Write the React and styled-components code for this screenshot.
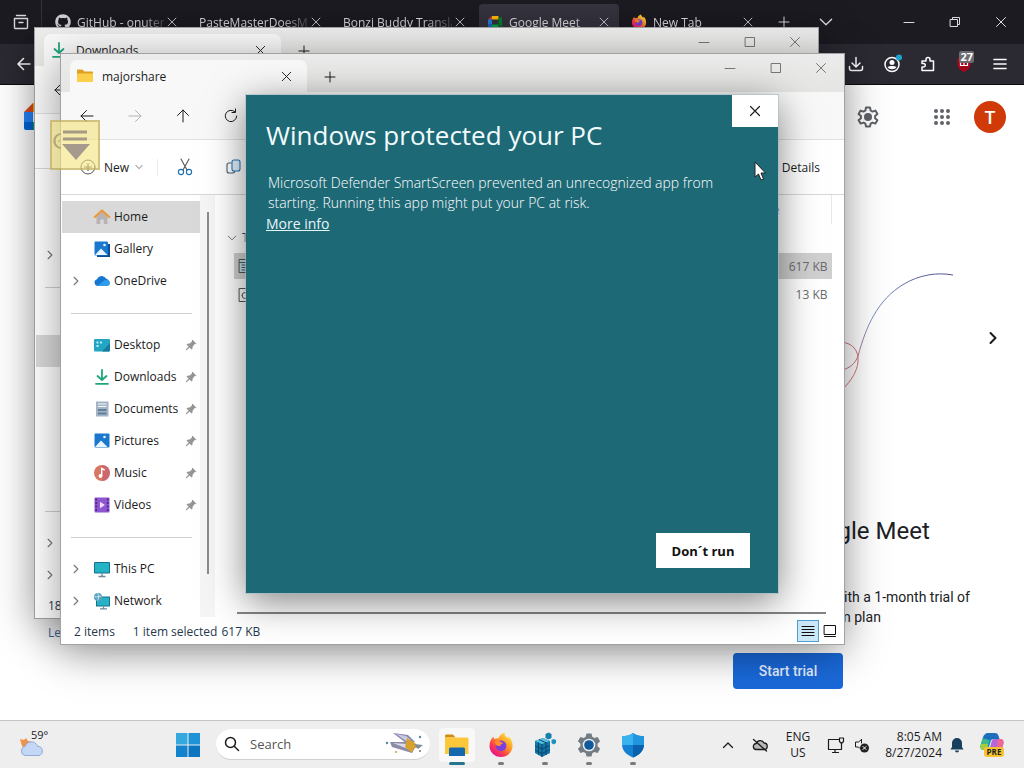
import React from "react";
import styled, { createGlobalStyle, css } from "styled-components";
import { FaGithub } from "react-icons/fa";

const ui = `"Open Sans", "Noto Sans", sans-serif`;
const web = `Roboto, "Liberation Sans", sans-serif`;

const GlobalStyle = createGlobalStyle`
  * { box-sizing: border-box; }
  body { margin: 0; font-family: ${ui}; font-size: 12px; color: #1b1b1b; }
  button { margin: 0; padding: 0; border: 0; background: none; font: inherit; color: inherit; cursor: pointer; }
  h1, h2, p, ul { margin: 0; padding: 0; font-weight: 400; }
  svg { display: block; flex: none; }
`;

/* ---------- icons ---------- */

const Line = ({ d, size = 16, box = 16, stroke = "currentColor", width = 1, children }) => (
  <svg width={size} height={size} viewBox={`0 0 ${box} ${box}`} fill="none" stroke={stroke} strokeWidth={width} strokeLinecap="round" strokeLinejoin="round" aria-hidden="true">
    {d && <path d={d} />}
    {children}
  </svg>
);

const CloseIcon = ({ size = 16, width }) => <Line size={size} width={width} d="M3.5 3.5l9 9M12.5 3.5l-9 9" />;
const PlusIcon = () => <Line d="M8 3v10M3 8h10" />;
const MinIcon = () => <Line d="M3 8.5h10" />;
const MaxIcon = () => <Line d="M3.5 3.5h9v9h-9z" />;
const RestoreIcon = () => <Line d="M3.5 5.5h7v7h-7zM5.5 5.5v-2h7v7h-2" />;
const BackIcon = ({ width }) => <Line width={width} d="M14 8H2M7.5 2.5L2 8l5.500 5.500" />;
const ForwardIcon = () => <Line d="M2 8h12M8.500 2.500L14 8l-5.500 5.500" />;
const UpIcon = () => <Line d="M8 14V2M2.500 7.500L8 2l5.500 5.500" />;
const RefreshIcon = () => <Line d="M13.700 8a5.700 5.700 0 1 1-1.900-4.300M12.500 1v3.500H9" />;
const ChevronDown = ({ size = 14, width }) => <Line size={size} width={width} d="M3 5.500l5 5 5-5" />;
const ChevronUp = () => <Line size={16} width={1.3} d="M3.500 10.500L8 6l4.500 4.500" />;
const ChevronRight = ({ size = 12, width = 1.5 }) => <Line size={size} width={width} d="M5.500 3l5 5-5 5" />;

const FolderIcon = ({ size = 18 }) => (
  <svg width={size} height={size} viewBox="0 0 18 18" aria-hidden="true">
    <path d="M1 3.500C1 3 1.400 2.500 2 2.500h4.500L8.500 4.500H16c.6 0 1 .4 1 1V7H1z" fill="#e0a020" />
    <path d="M1 6.500h16V14c0 .600-.400 1-1 1H2c-.600 0-1-.400-1-1z" fill="#fccf4a" />
  </svg>
);
const DownloadGlyph = ({ size = 18 }) => (
  <Line size={size} box={18} stroke="#1ea57d" width={1.8}>
    <path d="M9 2v9.500M4.500 8L9 12l4.500-4" />
    <path d="M3 15.800h12" />
  </Line>
);
const HomeIcon = () => (
  <svg width="18" height="18" viewBox="0 0 18 18" aria-hidden="true">
    <path d="M3.500 8.500L9 3.500l5.500 5V16h-3.800v-4.500H7.300V16H3.500z" fill="#b9b3b5" />
    <path d="M1.800 9L9 2.500 16.200 9" fill="none" stroke="#eb9a3b" strokeWidth="2.300" strokeLinecap="round" strokeLinejoin="round" />
  </svg>
);
const PictureIcon = ({ stacked }) => (
  <svg width="18" height="18" viewBox="0 0 18 18" aria-hidden="true">
    {stacked && <path d="M4 4h13v13H4z" fill="#0e4f91" />}
    <rect x="1.500" y="1.500" width={stacked ? 13.500 : 15} height="14" rx="1" fill="#1a78cf" />
    <path d="M2 15l6-6.500 6.500 6.500z" fill="#e9f5ff" />
    <circle cx="11.500" cy="5" r="1.300" fill="#e9f5ff" />
  </svg>
);
const CloudIcon = () => (
  <svg width="18" height="18" viewBox="0 0 18 18" aria-hidden="true">
    <path d="M4.500 14A3.500 3.500 0 0 1 4 7.200 5 5 0 0 1 13 6.500 4 4 0 0 1 14 14z" fill="#1677d2" />
    <path d="M4.500 14L11 8.500c2-1.500 6-.500 6 2.500 0 2-1.500 3-3 3z" fill="#2f9bea" />
  </svg>
);
const DesktopIcon = () => (
  <svg width="18" height="18" viewBox="0 0 18 18" aria-hidden="true">
    <rect x="1" y="3" width="16" height="12.500" rx="1" fill="#22a5c2" />
    <path d="M9 15.500L17 7v7.500l-1 1z" fill="#147c9f" />
    <path d="M3.500 5.500h2v2h-2zM3.500 9h2v2h-2zM7 5.500h2v2H7z" fill="#b9f0f6" />
  </svg>
);
const DocumentIcon = () => (
  <svg width="18" height="18" viewBox="0 0 18 18" aria-hidden="true">
    <path d="M3 1.500h12.500v15H3z" fill="#a3b4c4" />
    <path d="M5 4h8.500M5 6.500h8.500" stroke="#f3f8fc" strokeWidth="1.200" />
    <path d="M5 9h8.500v2H5zM5 12.500h8.500v2H5z" fill="#5f7f9d" />
  </svg>
);
const MusicIcon = () => (
  <svg width="18" height="18" viewBox="0 0 18 18" aria-hidden="true">
    <circle cx="9" cy="9" r="8" fill="#d9765f" />
    <path d="M9 1a8 8 0 0 1 0 16z" fill="#c25e77" opacity=".6" />
    <circle cx="7.500" cy="12" r="1.900" fill="#fff" />
    <path d="M8.700 12V4.500l3 1.500" fill="none" stroke="#fff" strokeWidth="1.400" />
  </svg>
);
const VideoIcon = () => (
  <svg width="18" height="18" viewBox="0 0 18 18" aria-hidden="true">
    <rect x="1.500" y="1.500" width="15" height="15" rx="1" fill="#8f55cf" />
    <path d="M3.200 2.500v13M14.800 2.500v13" stroke="#4d2a86" strokeWidth="1.800" strokeDasharray="2 1.500" />
    <path d="M7 5.800l5 3.200-5 3.200z" fill="#f1dcff" />
  </svg>
);
const MonitorIcon = () => (
  <svg width="18" height="18" viewBox="0 0 18 18" aria-hidden="true">
    <rect x="1" y="2" width="16" height="11.500" rx="1" fill="#166f93" />
    <rect x="2" y="3" width="14" height="9.500" fill="#22b4c4" />
    <path d="M9 13.500v2.500M5.500 16.500h7" stroke="#6f8796" strokeWidth="1.300" />
  </svg>
);
const NetworkIcon = () => (
  <svg width="18" height="18" viewBox="0 0 18 18" aria-hidden="true">
    <rect x="3" y="4.500" width="14" height="10" fill="#16708f" />
    <rect x="4" y="5.500" width="12" height="8" fill="#28b2c5" />
    <circle cx="5" cy="5" r="4" fill="#5aa2bd" />
    <path d="M1.500 4.500c2.500 1.500 4.500-1 6.500 0M4.500 1.500c2 2 1 5 0 7" stroke="#d3f1f6" strokeWidth=".9" fill="none" />
    <path d="M10.500 14.500v2M7 16.800h7" stroke="#6f8796" strokeWidth="1.200" />
  </svg>
);
const PinIcon = () => (
  <svg width="12" height="12" viewBox="0 0 12 12" aria-hidden="true">
    <path d="M7.500.8l3.700 3.700-.8.700-.7-.1-2 2.300-.3 2.400-.9.700-2-2L1.500 11.200.800 11.300.800 10.600 3.500 7.500l-2-2 .8-.8 2.400-.3 2.300-2-.2-.8z" fill="#959595" />
  </svg>
);
const ScissorsIcon = () => (
  <Line size={18} box={18} width={1.1}>
    <path d="M5 1l6 11M13 1L7 12" stroke="#555" />
    <circle cx="5" cy="14" r="2.600" stroke="#1d6fae" />
    <circle cx="13" cy="14" r="2.600" stroke="#1d6fae" />
  </Line>
);
const CopyIcon = () => (
  <Line size={18} box={18} width={1.1}>
    <path d="M6 5H4a2 2 0 0 0-2 2v6a2 2 0 0 0 2 2h4a2 2 0 0 0 1.800-1.500" stroke="#48606f" />
    <rect x="7" y="2" width="8" height="11" rx="2" stroke="#2178b8" fill="#dff0fb" />
  </Line>
);
const CirclePlus = () => (
  <Line size={16}>
    <circle cx="8" cy="8" r="7" stroke="#555" />
    <path d="M8 4.500v7M4.500 8h7" stroke="#555" />
  </Line>
);
const FirefoxIcon = ({ size = 26 }) => (
  <svg width={size} height={size} viewBox="0 0 26 26" aria-hidden="true">
    <defs>
      <linearGradient id="fx" x1=".85" y1=".1" x2=".2" y2=".9">
        <stop offset="0" stopColor="#ffe23c" /><stop offset=".4" stopColor="#ff9526" /><stop offset=".75" stopColor="#fb3a4e" /><stop offset="1" stopColor="#e5178d" />
      </linearGradient>
    </defs>
    <path d="M13 25C6.300 25 1.500 20 1.500 14c0-4 1.700-7.500 4-9.500 0 1.200.4 2 1 2.600C8 6.400 9.500 6.200 10.500 6.500 11 4 13.500 1.500 16.500.800c-.4 2.400 1.700 3.800 3.800 5.400.2-.700.200-1.300 0-2 2.800 2.300 4.300 5.800 4.300 9.600C24.600 20 19.600 25 13 25z" fill="url(#fx)" />
    <circle cx="13" cy="13.800" r="5.400" fill="#7b3fe0" />
    <path d="M6.500 10.500c2-2.300 5-1.800 6.300-.4 1.200.1 2.200.600 2.200 1.300-1.500.400-2.500 1-2.500 2.300-2 1-4.500 0-5-2z" fill="#ff8b2a" />
  </svg>
);
const MeetFavicon = () => (
  <svg width="16" height="16" viewBox="0 0 16 16" aria-hidden="true">
    <path d="M1 5.500L5 2v3.500z" fill="#e34133" /><path d="M5 2h6.500v3.500H5z" fill="#fbbc04" /><path d="M1 5.500h4v5H1z" fill="#2a7de1" />
    <path d="M1 10.500h4V14H2a1 1 0 0 1-1-1z" fill="#1967d2" /><path d="M5 10.500h6.500V13a1 1 0 0 1-1 1H5z" fill="#00ac47" /><path d="M11.500 4.500L15 2.500v11l-3.500-3z" fill="#00832d" />
  </svg>
);
const MeetLogo = () => (
  <svg width="40" height="30" viewBox="0 0 40 30" aria-hidden="true">
    <path d="M0 10L9 1v9z" fill="#e34b22" /><path d="M9 1h18a2 2 0 0 1 2 2v7H9z" fill="#fbbc04" /><path d="M0 10h9v10H0z" fill="#2684fc" />
    <path d="M0 20h9v8H2a2 2 0 0 1-2-2z" fill="#0066da" /><path d="M9 20h20v6a2 2 0 0 1-2 2H9z" fill="#00ac47" /><path d="M29 10l9-7v23l-9-7z" fill="#00832d" />
  </svg>
);
const GearOutline = () => (
  <svg width="24" height="24" viewBox="0 0 24 24" fill="none" aria-hidden="true">
    <path d="M10 2.500h4l.6 3 1.900 1.100 2.900-1 2 3.400-2.300 2v2.200l2.300 2-2 3.400-2.900-1-1.900 1.100-.6 2.900h-4l-.6-2.900-1.900-1.100-2.900 1-2-3.400 2.300-2V11L2.600 9l2-3.400 2.900 1 1.900-1.100z" stroke="#5f6368" strokeWidth="2" strokeLinejoin="round" />
    <circle cx="12" cy="12" r="4" fill="#5f6368" />
  </svg>
);
const AppsIcon = () => (
  <svg width="20" height="20" viewBox="0 0 20 20" fill="#5f6368" aria-hidden="true">
    {[4, 10, 16].map((y) => [4, 10, 16].map((x) => <circle key={`${x}${y}`} cx={x} cy={y} r="2" />))}
  </svg>
);

/* ---------- browser ---------- */

const Desktop = styled.div`
  position: relative; min-height: 100vh; display: flex; flex-direction: column; overflow: hidden; background: #fff;
`;
const Browser = styled.section`flex: 1; display: flex; flex-direction: column;`;
const TabStrip = styled.header`
  display: flex; align-items: center; height: 44px; background: #1c1b22; color: #dcdce0;
`;
const Recent = styled.button`
  display: flex; align-items: center; justify-content: center; width: 42px; height: 44px; margin-right: 5px;
  border-right: 1px solid #34333c;
`;
const Tabs = styled.div`display: flex; gap: 4px;`;
const BrowserTab = styled.div`
  display: flex; align-items: center; width: 140px; height: 36px; padding: 0 7px 0 8px; gap: 6px; border-radius: 4px;
  background: ${(p) => (p.$active ? "#35343f" : "transparent")};
`;
const TabLabel = styled.span`
  flex: 1; margin-right: -6px; overflow: hidden; white-space: nowrap;
  mask-image: linear-gradient(to right, #000 75%, rgba(0, 0, 0, 0.2) 100%);
`;
const IconButton = styled.button`
  display: flex; align-items: center; justify-content: center; flex: none;
  width: ${(p) => p.$w || 16}px; height: ${(p) => p.$h || 16}px; color: ${(p) => p.$color || "inherit"};
`;
const Right = styled.div`display: flex; align-items: center; margin-left: auto;`;
const Toolbar = styled.div`
  display: flex; align-items: center; height: 41px; padding: 0 6px; background: #2b2a33; color: #fbfbfe;
  border-bottom: 1px solid #0c0c0d;
`;
const ExtBadge = styled.span`
  position: absolute; top: -3px; right: 8px; padding: 0 1px; border-radius: 2px; background: #6b6b70; color: #fff;
  font-size: 11px; font-weight: 700; line-height: 12px;
`;
const Ublock = styled(IconButton)`position: relative;`;

const MeetHeader = styled.div`display: flex; align-items: center; height: 64px; padding: 0 18px 0 24px;`;
const MeetTools = styled(Right)`gap: 40px;`;
const Account = styled.div`display: flex; align-items: center; gap: 22px;`;
const Avatar = styled.button`
  width: 32px; height: 32px; border-radius: 50%; background: #d03a08; color: #fff; font: 500 18px ${web};
`;
const MeetMain = styled.main`
  display: grid; grid-template-columns: 1fr 472px; font-family: ${web};
`;
const MeetIntro = styled.div`display: flex; flex-direction: column; justify-content: flex-end; padding: 0 48px 47px;`;
const LearnMore = styled.a`color: #3c6a9e; font: 12px/18px ${ui}; text-decoration: none;`;
const Promo = styled.div`padding-top: 24px; text-align: center;`;
const Carousel = styled.div`display: flex; align-items: center; justify-content: space-between; padding: 0 19px;`;
const PromoTitle = styled.h1`margin-top: 12px; font-size: 24px; line-height: 32px; color: #202124;`;
const PromoText = styled.p`margin-top: 40px; font-size: 14px; line-height: 20px; color: #202124;`;
const StartTrial = styled.button`
  width: 110px; height: 36px; margin-top: 26px; border-radius: 4px; background: #1a69da; color: #e4efff;
  font: 500 14px ${web};
`;

const browserTabs = [
  { label: "GitHub - onuter", icon: <FaGithub size={16} /> },
  { label: "PasteMasterDoesMa" },
  { label: "Bonzi Buddy Transla" },
  { label: "Google Meet", icon: <MeetFavicon />, active: true },
  { label: "New Tab", icon: <FirefoxIcon size={16} /> },
];

function BrowserWindow() {
  return (
    <Browser>
      <TabStrip>
        <Recent aria-label="Recent browsing">
          <Line width={1.4}><path d="M3.500 1.500h9M1.500 4.500h13v9a1 1 0 0 1-1 1h-11a1 1 0 0 1-1-1zM6 8.500h4" /></Line>
        </Recent>
        <Tabs>
          {browserTabs.map((t) => (
            <BrowserTab key={t.label} $active={t.active}>
              {t.icon}
              <TabLabel>{t.label}</TabLabel>
              <IconButton aria-label={`Close ${t.label}`}><CloseIcon size={14} /></IconButton>
            </BrowserTab>
          ))}
        </Tabs>
        <IconButton aria-label="New tab" $w={42}><PlusIcon /></IconButton>
        <IconButton aria-label="List all tabs" $w={42}><ChevronDown size={18} width={1.2} /></IconButton>
        <Right>
          <IconButton aria-label="Minimize" $w={46}><MinIcon /></IconButton>
          <IconButton aria-label="Restore" $w={46}><RestoreIcon /></IconButton>
          <IconButton aria-label="Close" $w={46}><CloseIcon /></IconButton>
        </Right>
      </TabStrip>
      <Toolbar>
        <IconButton aria-label="Back" $w={36}><BackIcon width={1.6} /></IconButton>
        <Right>
          <IconButton aria-label="Downloads" $w={36}><Line width={1.5} d="M8 1.500v9M4 7l4 4 4-4M1.500 10.500v2a2 2 0 0 0 2 2h9a2 2 0 0 0 2-2v-2" /></IconButton>
          <IconButton aria-label="Account" $w={36}>
            <svg width="20" height="20" viewBox="0 0 20 20" fill="none" aria-hidden="true">
              <circle cx="10" cy="10.500" r="7" stroke="#fbfbfe" strokeWidth="1.500" />
              <circle cx="10" cy="8.500" r="2.500" fill="#fbfbfe" /><path d="M5.500 13c1.500-1.500 7.500-1.500 9 0-1.500 3-7.500 3-9 0z" fill="#fbfbfe" />
              <circle cx="17" cy="3.500" r="3" fill="#1ba3d0" />
            </svg>
          </IconButton>
          <IconButton aria-label="Extensions" $w={36}>
            <Line width={1.5} d="M2 5h4V3.500a2 2 0 0 1 4 0V5h3.500v9.500H2V11h1.500a1.700 1.700 0 0 0 0-3.500H2z" />
          </IconButton>
          <Ublock aria-label="uBlock Origin" $w={36} $h={20}>
            <svg width="16" height="18" viewBox="0 0 16 18" aria-hidden="true">
              <path d="M8 1l6.500 2v6c0 4-3 6.500-6.500 8-3.500-1.500-6.500-4-6.500-8V3z" fill="#a3081a" />
              <path d="M4.500 7v3.500h3.500V7M8 10.500h3.500V7H8" stroke="#fff" strokeWidth="1.200" fill="none" />
            </svg>
            <ExtBadge>27</ExtBadge>
          </Ublock>
          <IconButton aria-label="Menu" $w={36}><Line width={1.6} d="M2 3.500h12M2 8h12M2 12.500h12" /></IconButton>
        </Right>
      </Toolbar>
      <MeetHeader>
        <MeetLogo />
        <MeetTools>
          <IconButton aria-label="Settings" $w={48} $h={48}><GearOutline /></IconButton>
          <Account>
            <IconButton aria-label="Google apps" $w={20} $h={48}><AppsIcon /></IconButton>
            <Avatar>T</Avatar>
          </Account>
        </MeetTools>
      </MeetHeader>
      <MeetMain>
        <MeetIntro><LearnMore href="#learn">Learn more about Google Meet</LearnMore></MeetIntro>
        <Promo>
          <Carousel>
            <IconButton aria-label="Previous" $w={24} $h={24}><ChevronRight size={16} /></IconButton>
            <svg width="330" height="330" viewBox="0 0 330 330" fill="none" aria-hidden="true">
              <defs>
                <linearGradient id="arc" x1="1" y1="0" x2="0" y2="1">
                  <stop offset="0" stopColor="#50528f" /><stop offset=".6" stopColor="#7d8fbf" /><stop offset="1" stopColor="#d06a72" />
                </linearGradient>
              </defs>
              <path d="M330 102c-16-3-34 0-49 9-27 16-38 43-46 72-3 8-8 12-18 15" stroke="url(#arc)" />
              <path d="M216 169c14 0 20 9 19 20-1 9-6 18-16 28" stroke="#d9707a" />
            </svg>
            <IconButton aria-label="Next" $w={24} $h={24}><ChevronRight size={16} width={2} /></IconButton>
          </Carousel>
          <PromoTitle>Do more with Google Meet</PromoTitle>
          <PromoText>Enjoy premium video calling options with a 1-month trial of<br />the Google One Premium plan</PromoText>
          <StartTrial>Start trial</StartTrial>
        </Promo>
      </MeetMain>
    </Browser>
  );
}

/* ---------- file explorer ---------- */

const Window = styled.section`
  position: absolute; left: ${(p) => p.$x}px; top: ${(p) => p.$y}px; z-index: ${(p) => p.$z};
  display: flex; flex-direction: column; width: 785px;
  border: 1px solid #a2a2a2; background: #fff; box-shadow: 0 8px 40px rgba(0, 0, 0, 0.38);
`;
const TitleBar = styled.header`
  display: flex; align-items: flex-start; height: 38px; padding-left: 9px; background: linear-gradient(#ebebeb, #e5e5e3);
`;
const FolderTab = styled.div`
  display: flex; align-items: center; width: 237px; height: 32px; margin-top: 6px; padding: 0 13px 0 6px; gap: 8px;
  border-radius: 7px 7px 0 0; background: #f8f8f8;
`;
const FolderName = styled.span`flex: 1;`;
const NavRow = styled.div`
  display: flex; align-items: center; height: 48px; padding-left: 2px; background: #f8f8f8; border-bottom: 1px solid #e1e1e1;
`;
const CommandBar = styled.div`
  display: flex; align-items: center; height: 55px; padding: 0 24px 0 19px; border-bottom: 1px solid #d8d8d8;
`;
const NewButton = styled.button`
  display: flex; align-items: center; gap: 8px; padding-right: 13px; border-right: 1px solid #ececec; svg:last-child { color: #aaa; margin-left: -3px; }
`;
const DetailsButton = styled.button`margin-left: auto;`;
const Body = styled.div`display: flex;`;
const Sidebar = styled.nav`width: 139px; padding: 6px 0 0 1px;`;
const SideLink = styled.a`
  display: grid; grid-template-columns: 28px 18px 1fr 12px; align-items: center; column-gap: 3px; height: 32px;
  padding: 0 3px 1px 0; color: inherit; text-decoration: none;
  background: ${(p) => (p.$selected ? "#d9d9d9" : "transparent")};
`;
const Expander = styled.span`display: flex; justify-content: center; color: #777;`;
const Divider = styled.hr`height: 1px; margin: 16px 8px 15px 9px; border: 0; background: #cfcfcf;`;
const SideScroll = styled.div`
  width: 15px; padding: 17px 0 43px 7px; background: #f5f5f5;
  &::before { content: ""; display: block; width: 2px; height: 100%; background: #8b8b8b; }
`;
const Files = styled.div`flex: 1; display: flex; flex-direction: column; padding: 0 12px 0 19px;`;
const FileTable = styled.table`
  width: 100%; border-collapse: collapse; color: #6b6b6b;
  th, td { padding: 0; font-weight: 400; text-align: left; }
  td:last-child { width: 74px; padding-right: 4px; text-align: right; }
`;
const HeadCell = styled.th`
  height: 29px;
  &:first-child { padding-left: 24px; }
  &:last-child { color: #333; border-right: 1px solid #e8e8e8; }
`;
const GroupCell = styled.td`height: 28px;`;
const GroupLabel = styled.button`
  display: flex; align-items: center; gap: 4px; margin-left: -8px; color: #2a4c77; svg { color: #777; }
`;
const FileRow = styled.tr`
  height: 28px;
  td { ${(p) => p.$selected && css`background: #d0d0d0; background-clip: padding-box; border-block: 2px solid transparent;`} }
`;
const FileName = styled.span`display: flex; align-items: center; gap: 6px; padding-left: 3px;`;
const HScroll = styled.div`height: 2px; margin: auto 6px 3px 3px; background: #848484;`;
const StatusBar = styled.footer`
  display: flex; align-items: center; height: 27px; padding: 1px 3px 0 13px; color: #26384d;
`;
const StatusText = styled.span`margin-right: ${(p) => p.$gap}px;`;
const ViewButton = styled.button`
  display: flex; align-items: center; justify-content: center; width: 22px; height: 22px; color: #111;
  ${(p) => p.$on && css`background: #cce8f8; border: 1px solid #4ba0cf;`}
`;

const sideGroups = [
  [
    { label: "Home", icon: <HomeIcon /> },
    { label: "Gallery", icon: <PictureIcon stacked /> },
    { label: "OneDrive", icon: <CloudIcon />, expand: true },
  ],
  [
    { label: "Desktop", icon: <DesktopIcon />, pin: true },
    { label: "Downloads", icon: <DownloadGlyph />, pin: true },
    { label: "Documents", icon: <DocumentIcon />, pin: true },
    { label: "Pictures", icon: <PictureIcon />, pin: true },
    { label: "Music", icon: <MusicIcon />, pin: true },
    { label: "Videos", icon: <VideoIcon />, pin: true },
  ],
  [
    { label: "This PC", icon: <MonitorIcon />, expand: true },
    { label: "Network", icon: <NetworkIcon />, expand: true },
  ],
];

function Explorer({ x, y, z, name, icon, selected, files, status }) {
  return (
    <Window $x={x} $y={y} $z={z} aria-label={name}>
      <TitleBar>
        <FolderTab>
          {icon}
          <FolderName>{name}</FolderName>
          <IconButton aria-label="Close tab"><CloseIcon size={15} /></IconButton>
        </FolderTab>
        <IconButton aria-label="New tab" $w={46} $h={45}><PlusIcon /></IconButton>
        <Right>
          <IconButton aria-label="Minimize" $w={46} $h={28} $color="#777"><MinIcon /></IconButton>
          <IconButton aria-label="Maximize" $w={45} $h={28} $color="#777"><MaxIcon /></IconButton>
          <IconButton aria-label="Close" $w={46} $h={28} $color="#777"><CloseIcon /></IconButton>
        </Right>
      </TitleBar>
      <NavRow>
        <IconButton aria-label="Back" $w={48}><BackIcon /></IconButton>
        <IconButton aria-label="Forward" $w={48} $color="#b5b5b5"><ForwardIcon /></IconButton>
        <IconButton aria-label="Up" $w={48}><UpIcon /></IconButton>
        <IconButton aria-label="Refresh" $w={48}><RefreshIcon /></IconButton>
      </NavRow>
      <CommandBar>
        <NewButton><CirclePlus />New<ChevronDown size={10} width={1.8} /></NewButton>
        <IconButton aria-label="Cut" $w={54}><ScissorsIcon /></IconButton>
        <IconButton aria-label="Copy" $w={44}><CopyIcon /></IconButton>
        <DetailsButton>Details</DetailsButton>
      </CommandBar>
      <Body>
        <Sidebar aria-label="Folders">
          {sideGroups.map((group, i) => (
            <React.Fragment key={i}>
              {i > 0 && <Divider />}
              {group.map((item) => (
                <SideLink key={item.label} href={`#${item.label}`} $selected={item.label === selected}>
                  <Expander>{item.expand && <ChevronRight />}</Expander>
                  {item.icon}
                  {item.label}
                  {item.pin && <PinIcon />}
                </SideLink>
              ))}
            </React.Fragment>
          ))}
        </Sidebar>
        <SideScroll />
        <Files>
          <FileTable>
            <thead><tr><HeadCell>Name</HeadCell><HeadCell>Size</HeadCell></tr></thead>
            <tbody>
              <tr><GroupCell colSpan={2}><GroupLabel><ChevronDown size={12} width={1.3} />Today</GroupLabel></GroupCell></tr>
              {files.map((f) => (
                <FileRow key={f.name} $selected={f.selected}>
                  <td><FileName><DocumentOutline solid={f.selected} />{f.name}</FileName></td>
                  <td>{f.size}</td>
                </FileRow>
              ))}
            </tbody>
          </FileTable>
          <HScroll />
        </Files>
      </Body>
      <StatusBar>
        {status.map((s, i) => <StatusText key={s} $gap={i === 0 ? 18 : 4}>{s}</StatusText>)}
        <Right>
          <ViewButton $on aria-label="Details view"><Line d="M2 3.500h12M2 6.500h12M2 9.500h12M2 12.500h12" /></ViewButton>
          <ViewButton aria-label="Large icons view"><Line d="M2.500 2.500h11v9h-11zM2.500 13.500h11" /></ViewButton>
        </Right>
      </StatusBar>
    </Window>
  );
}

const DocumentOutline = ({ solid }) => (
  <Line stroke="#555">
    <rect x="2.500" y="1.500" width="12" height="13" fill={solid ? "#bfe0ea" : "#fff"} />
    <path d={solid ? "M2.500 4.500h12M5 7h6M5 9.500h6M5 12h6" : "M5 8.500a3 3 0 1 1 6 0 3 3 0 1 1-6 0"} />
  </Line>
);

/* ---------- SmartScreen dialog ---------- */

const Dialog = styled.section`
  position: absolute; left: 246px; top: 95px; z-index: 3; display: flex; flex-direction: column; align-items: flex-start;
  width: 532px; min-height: 498px; padding: 20px 28px 25px 20px; color: #e6f6fb; background: #1e6976;
  box-shadow: 0 0 0 1px rgba(160, 190, 195, 0.6), 0 8px 36px rgba(0, 0, 0, 0.5);
`;
const DialogClose = styled.button`
  position: absolute; top: 0; right: 0; display: flex; align-items: center; justify-content: center;
  width: 46px; height: 32px; background: #fff; color: #222;
`;
const DialogTitle = styled.h2`font-size: 26px; line-height: 40px; font-weight: 400; color: #f2fbfd;`;
const DialogText = styled.p`width: 460px; margin-top: 18px; padding-left: 2px; font-size: 14px; line-height: 20px; font-weight: 300; color: #fff;`;
const MoreInfo = styled.a`margin-top: 1px; color: inherit; font-size: 14px; line-height: 20px;`;
const DontRun = styled.button`
  align-self: flex-end; margin-top: auto; width: 94px; height: 35px; background: #fff; color: #111; font-size: 13px; font-weight: 700;
`;

/* ---------- taskbar ---------- */

const Taskbar = styled.footer`
  position: relative; z-index: 5; display: flex; align-items: center; height: 48px; padding: 0 12px 0 16px;
  background: #eeeeee; border-top: 1px solid #c4c4c4;
`;
const Weather = styled.button`position: relative; width: 32px; height: 32px; margin-right: 128px;`;
const Degrees = styled.span`position: absolute; left: 15px; top: 0; font-size: 11px; line-height: 12px;`;
const SearchBox = styled.label`
  display: flex; align-items: center; gap: 8px; width: 214px; height: 31px; margin: 0 5px 0 16px; padding: 0 4px 0 8px; border-radius: 16px;
  background: #fff; border-bottom: 1px solid #d0d0d0;
`;
const SearchInput = styled.input`
  flex: 1; min-width: 0; border: 0; outline: 0; background: none; font: 13px ${ui}; &::placeholder { color: #555; opacity: 1; }
`;
const AppButton = styled.button`
  position: relative; display: flex; align-items: center; justify-content: center; width: 44px; height: 46px;
  &::after {
    content: ""; position: absolute; bottom: 3px; left: 50%; height: 3px; border-radius: 2px; transform: translateX(-50%);
    width: ${(p) => (p.$active ? 16 : 6)}px; background: ${(p) => (p.$active ? "#27758f" : "#7b7b7b")};
  }
`;
const ActivePlate = styled.span`display: flex; align-items: center; justify-content: center; width: 36px; height: 34px; border-radius: 4px; background: #f8f8f8;`;
const TrayText = styled.button`
  width: ${(p) => p.$w}px; font-size: 12px; line-height: 16px; text-align: ${(p) => p.$align || "center"}; white-space: pre-line;
`;

const WeatherIcon = () => (
  <svg width="32" height="32" viewBox="0 0 32 32" aria-hidden="true">
    <path d="M4 10l4 1 2-2 2 3 4 1-6 8-4-4z" fill="#f0924a" />
    <path d="M9 26.500a4.700 4.700 0 0 1 .2-9.200 6.500 6.500 0 0 1 12.300 0A4.700 4.700 0 0 1 23 26.500z" fill="#c4d8f5" stroke="#94a9d8" />
  </svg>
);
const StartIcon = () => (
  <svg width="24" height="24" viewBox="0 0 24 24" aria-hidden="true">
    <path d="M0 0h11.500v11.500H0z" fill="#35a9df" /><path d="M12.500 0H24v11.500H12.500z" fill="#1e93d6" />
    <path d="M0 12.500h11.500V24H0z" fill="#1283cc" /><path d="M12.500 12.500H24V24H12.500z" fill="#0b75c0" />
  </svg>
);
const RocketIcon = () => (
  <svg width="42" height="26" viewBox="0 0 42 26" aria-hidden="true">
    <path d="M9 2l15 2 7 7-9 1z" fill="#8687ac" /><path d="M12 3l10 2 5 4-5 1z" fill="#c8c9e2" />
    <path d="M6 11l16 0 10 4-4 7-20-6z" fill="#8c8ba8" /><path d="M9 12l14 1 5 3-4 2z" fill="#dcdbe9" />
    <path d="M23 7l8 5 5 5-6 0-2 5-7-6z" fill="#d8a02c" /><path d="M30 13l9 1-5 4z" fill="#7c8da0" />
    <circle cx="36" cy="6" r="1.200" fill="#4f8c98" /><circle cx="3" cy="12" r="1.200" fill="#4f8c98" /><circle cx="12" cy="21" r="1" fill="#c99b44" />
    <circle cx="36" cy="20" r="1" fill="#777" />
  </svg>
);
const ExplorerIcon = () => (
  <svg width="28" height="28" viewBox="0 0 28 28" aria-hidden="true">
    <path d="M2 5c0-1 .5-1.500 1.500-1.500H10l2.500 3H2z" fill="#d08a15" /><path d="M2 6.500h22c1 0 1.500.5 1.500 1.500v15H2z" fill="#fcc73a" />
    <path d="M6 25v-7c0-1 .7-1.500 1.500-1.500h13c.8 0 1.500.5 1.500 1.500v7z" fill="#1668ad" />
  </svg>
);
const RegistryIcon = () => (
  <svg width="26" height="26" viewBox="0 0 26 26" aria-hidden="true">
    <path d="M3 9l8-3 7 3v12l-8 4-7-4z" fill="#1276a8" /><path d="M3 9l8-3 7 3-8 3z" fill="#56bfe0" />
    <path d="M6.500 10.500v12M10 12v13M14 10.500v12.500M3 14l7 3 8-3.500M3 18l7 3.500 8-4M7 7.500l7.500 3.500" stroke="#0b466d" fill="none" />
    <path d="M13.500 2l3-1.500 3 1.500v4l-3 1.500-3-1.500z" fill="#177fae" /><path d="M19.500 8l2.200-1 2.300 1v3l-2.300 1.500-2.200-1.500z" fill="#1c91bd" />
  </svg>
);
const SettingsIcon = () => (
  <svg width="26" height="26" viewBox="0 0 26 26" aria-hidden="true">
    <path d="M10.500 1.500h5l.8 3.300 2 1.200 3.300-1 2.500 4.300-2.500 2.400v2.600l2.500 2.400-2.500 4.300-3.300-1-2 1.200-.8 3.300h-5l-.8-3.300-2-1.200-3.300 1-2.500-4.300 2.500-2.400v-2.600L1.900 9.300 4.400 5l3.300 1 2-1.200z" fill="#737b83" />
    <circle cx="13" cy="13" r="6.300" fill="#e8eef3" /><circle cx="13" cy="13" r="4.800" fill="#11599b" />
  </svg>
);
const ShieldIcon = () => (
  <svg width="26" height="26" viewBox="0 0 26 26" aria-hidden="true">
    <path d="M13 1c3 2.500 7 3 11 3v8c0 7-5 11-11 13.500C7 23 2 19 2 12V4c4 0 8-.5 11-3z" fill="#1380d2" />
    <path d="M13 1c3 2.500 7 3 11 3v9H13z" fill="#2295df" /><path d="M2 4c4 0 8-.5 11-3v12H2z" fill="#39b3ee" /><path d="M13 13h11c-.5 6.500-5.500 10.500-11 12.500z" fill="#0b61ae" />
  </svg>
);
const CopilotIcon = () => (
  <svg width="28" height="28" viewBox="0 0 28 28" aria-hidden="true">
    <path d="M9 3h8c2 0 3 1 3.500 3l.5 2h-5c-2 0-3 1-3.500 3L10 19H6c-3 0-4-2-3.300-5L5 6c.6-2 2-3 4-3z" fill="#1a8ad0" />
    <path d="M4.500 8h7l-2.500 11H6c-3 0-4-2-3.300-5z" fill="#3fb98a" /><path d="M3 13h7l-1 6H6c-3 0-3.800-2-3.300-5z" fill="#a5cc3a" />
    <path d="M9 2h8c2 0 3 1 3.500 3l1 3h-8l-3 1-5-2c.6-2.500 2-5 3.500-5z" fill="#1c6fb8" />
    <path d="M16 8h6c3 0 4 2 3.300 5L24 18H11.500l2-7c.5-2 1-3 2.500-3z" fill="#b766d8" /><path d="M20 8h2c3 0 4 2 3.300 5L24 18h-5z" fill="#ee6795" />
    <rect x="6" y="16" width="20" height="10" rx="3" fill="#f6c331" />
    <text x="16" y="24" textAnchor="middle" fontFamily="Open Sans" fontSize="8" fontWeight="700" fill="#222">PRE</text>
  </svg>
);

function TaskBar() {
  return (
    <Taskbar>
      <Weather aria-label="Weather"><WeatherIcon /><Degrees>59°</Degrees></Weather>
      <IconButton aria-label="Start" $w={24} $h={24}><StartIcon /></IconButton>
      <SearchBox>
        <Line width={1.5} d="M10.500 10.500l4 4"><circle cx="6.500" cy="6.500" r="5" /></Line>
        <SearchInput type="search" placeholder="Search" aria-label="Search" />
        <RocketIcon />
      </SearchBox>
      <AppButton $active aria-label="File Explorer"><ActivePlate><ExplorerIcon /></ActivePlate></AppButton>
      <AppButton aria-label="Firefox"><FirefoxIcon /></AppButton>
      <AppButton aria-label="Registry Editor"><RegistryIcon /></AppButton>
      <AppButton aria-label="Settings"><SettingsIcon /></AppButton>
      <AppButton aria-label="Windows Security"><ShieldIcon /></AppButton>
      <Right>
        <IconButton aria-label="Hidden icons" $w={32}><ChevronUp /></IconButton>
        <IconButton aria-label="OneDrive offline" $w={32}>
          <Line width={1.300}><path d="M4.500 12.500a3 3 0 0 1-.3-6A4.200 4.200 0 0 1 12 6a3.200 3.200 0 0 1 0 6.500z" fill="#b8b8b8" /><path d="M1.500 2.500l13 11.500" /></Line>
        </IconButton>
        <TrayText $w={44}>{"ENG\nUS"}</TrayText>
        <IconButton aria-label="Network" $w={32}>
          <Line size={18} box={18} width={1.200} d="M11.500 3.500h-10v10h13V9M5.500 16.500h6M8 13.500v3M12.500 2h4v3.500l-2 2-2-2zM14.500 7.500v2" />
        </IconButton>
        <IconButton aria-label="Muted" $w={20}>
          <Line><path d="M7.500 2.500L4.500 5h-3v5h3l1.500 1.500M7.500 2.500V6" /><circle cx="10.500" cy="11" r="4.500" fill="#222" stroke="none" /><path d="M9 9.500l3 3M12 9.500l-3 3" stroke="#fff" /></Line>
        </IconButton>
        <TrayText $w={70} $align="right">{"8:05 AM\n8/27/2024"}</TrayText>
        <IconButton aria-label="Notifications" $w={30}>
          <svg width="16" height="16" viewBox="0 0 16 16" fill="#17405d" aria-hidden="true"><path d="M8 1a5 5 0 0 0-5 5v4l-1.500 2.500h13L13 10V6a5 5 0 0 0-5-5zM6 13.500h4a2 2 0 0 1-4 0z" /></svg>
        </IconButton>
        <IconButton aria-label="Copilot" $w={40} $h={28}><CopilotIcon /></IconButton>
      </Right>
    </Taskbar>
  );
}

const Sticker = styled.div`
  position: absolute; left: 50px; top: 120px; z-index: 4; width: 50px; height: 50px;
  border: 2px solid rgba(165, 145, 75, 0.45); background: rgba(244, 226, 122, 0.6);
`;
const Pointer = styled.svg`position: absolute; left: 754px; top: 161px; z-index: 6;`;

export default function App() {
  return (
    <>
      <GlobalStyle />
      <Desktop>
        <BrowserWindow />
        <Explorer x={34} y={27} z={1} name="Downloads" icon={<DownloadGlyph />} selected="Downloads" files={[]} status={["18 items"]} />
        <Explorer
          x={60} y={53} z={2} name="majorshare" icon={<FolderIcon />} selected="Home"
          files={[{ name: "majorshare.exe", size: "617 KB", selected: true }, { name: "settings.ini", size: "13 KB" }]}
          status={["2 items", "1 item selected", "617 KB"]}
        />
        <Dialog role="dialog" aria-labelledby="smartscreen-title">
          <DialogClose aria-label="Close"><CloseIcon width={1.200} /></DialogClose>
          <DialogTitle id="smartscreen-title">Windows protected your PC</DialogTitle>
          <DialogText>Microsoft Defender SmartScreen prevented an unrecognized app from starting. Running this app might put your PC at risk.</DialogText>
          <MoreInfo href="#more">More info</MoreInfo>
          <DontRun>Don´t run</DontRun>
        </Dialog>
        <Sticker>
          <svg width="46" height="46" viewBox="0 0 46 46" fill="none" aria-hidden="true">
            <path d="M11 10h24M11 17h24" stroke="#a59a84" strokeWidth="3" />
            <path d="M10 22h28L24 38z" fill="#a59a8c" />
            <path d="M9 12a7 7 0 0 0 0 14" stroke="#b0a478" strokeWidth="1.500" />
          </svg>
        </Sticker>
        <Pointer width="12" height="20" viewBox="0 0 12 20" aria-hidden="true">
          <path d="M1 1v15l3.500-3 2.500 6 2.500-1-2.500-6h4.500z" fill="#fff" stroke="#222" />
        </Pointer>
        <TaskBar />
      </Desktop>
    </>
  );
}
